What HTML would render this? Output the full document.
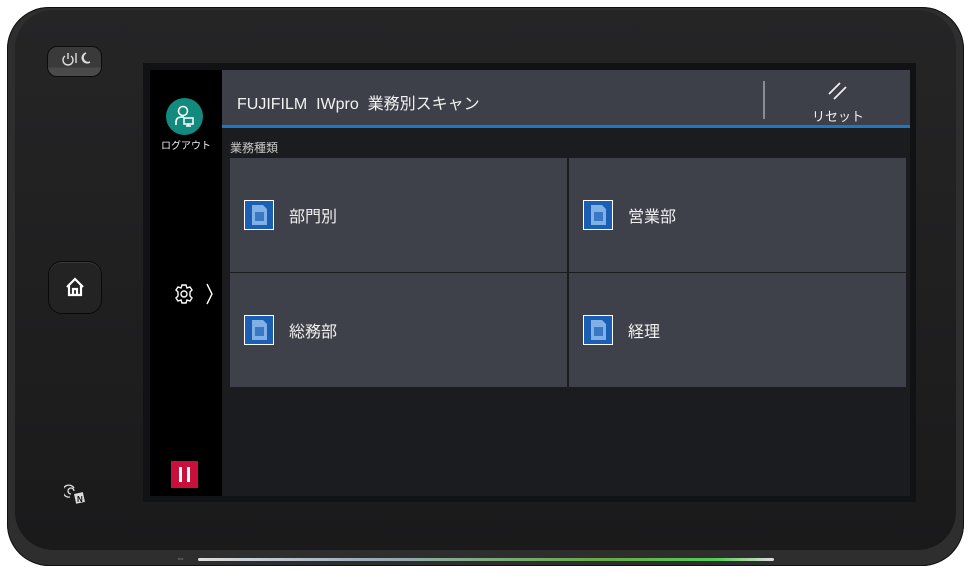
<!DOCTYPE html>
<html><head><meta charset="utf-8"><style>
*{margin:0;padding:0;box-sizing:border-box}
body{width:970px;height:570px;background:#fff;position:relative;overflow:hidden;font-family:"Liberation Sans","Noto Sans CJK JP",sans-serif}
.dev{position:absolute;left:7px;top:7px;width:957px;height:559px;border-radius:42px;background:#2e2e2f;box-shadow:inset 0 0 0 1px #111}
.face{position:absolute;left:8px;top:3px;width:941px;height:540px;border-radius:38px;background:linear-gradient(#252526,#1a1a1b)}
.bez{position:absolute;left:143px;top:63px;width:773px;height:439px;background:#111214}
.side{position:absolute;left:150px;top:70px;width:72px;height:426px;background:#000}
.main{position:absolute;left:222px;top:70px;width:688px;height:426px;background:#1b1c20}
.hdr{position:absolute;left:0;top:0;width:688px;height:58px;background:#3e4049;border-bottom:3px solid #1b78c8}
.tile{position:absolute;width:337px;height:114px;background:#3f414a;color:#f0f0f0;font-size:16px}
.tile span{position:absolute;left:59px;top:45px}
.ic{position:absolute;left:14px;top:42px}
.btn{position:absolute;border-radius:10px;background:#2b2b2c;border:1px solid #0c0c0c;box-shadow:0 1px 0 #3a3a3a inset}
</style></head><body>
<div class="dev"><div class="face"></div></div>
<div class="btn" style="left:47px;top:46px;width:55px;height:31px;background:linear-gradient(#3a3a3b 70%,#4a4a4b 70%)">
<svg width="55" height="24" viewBox="0 0 55 24"><path d="M17 9 A5 5 0 1 0 23 9 M20 6 V12" fill="none" stroke="#ddd" stroke-width="1.4"/><path d="M28 6 V16" stroke="#ddd" stroke-width="1.4"/><path d="M38 6 A5 5 0 1 0 42 15 A4 4 0 0 1 38 6 Z" fill="none" stroke="#ddd" stroke-width="1.4"/></svg></div>
<div class="btn" style="left:48px;top:261px;width:54px;height:53px;border-radius:14px;background:#232324;border-color:#0a0a0a">
<svg width="54" height="53" viewBox="0 0 54 53"><path d="M18 25 L26 17 L34 25 M20 23 V33 H32 V23 M24 33 V27 H28 V33" fill="none" stroke="#fff" stroke-width="2.2"/></svg></div>
<svg style="position:absolute;left:64px;top:484px" width="24" height="24" viewBox="0 0 24 24"><path d="M10 4 A6 6 0 1 0 6 13 M10 7 A3 3 0 1 0 7 10" fill="none" stroke="#ddd" stroke-width="1.3"/><rect x="11" y="9" width="9" height="10" fill="#ddd" transform="rotate(-12 15 14)"/><text x="13" y="18" font-size="8" font-weight="bold" fill="#111" font-family="Liberation Sans">N</text></svg>
<div style="position:absolute;left:198px;top:558px;width:576px;height:3px;border-radius:2px;background:linear-gradient(90deg,#ddd,#9ab 30%,#6a4 70%,#5c5 90%,#ddd)"></div>
<div style="position:absolute;left:176px;top:553px;color:#999;font-size:9px">⇔</div>
<div class="bez"></div>
<div class="side">
<div style="position:absolute;left:16px;top:28px;width:37px;height:37px;border-radius:50%;background:#138a7e">
<svg width="37" height="37" viewBox="0 0 37 37"><circle cx="17" cy="13" r="4.5" fill="none" stroke="#fff" stroke-width="1.6"/><path d="M10 27 V24 Q10 19 16 19 H18" fill="none" stroke="#fff" stroke-width="1.6"/><rect x="18" y="20" width="9" height="6" fill="none" stroke="#fff" stroke-width="1.5"/><path d="M22.5 26 V28 M20 28 H25" stroke="#fff" stroke-width="1.4"/></svg></div>
<div style="position:absolute;left:0;width:72px;top:67px;text-align:center;color:#eee;font-size:10px">ログアウト</div>
<svg style="position:absolute;left:22px;top:212px" width="44" height="24" viewBox="0 0 44 24"><g transform="translate(12,12)" fill="none" stroke="#fff" stroke-width="1.4"><circle r="3"/><path d="M-2 -9 H2 L3 -6 L6 -7 L8 -4 L6 -2 L6 2 L8 4 L6 7 L3 6 L2 9 H-2 L-3 6 L-6 7 L-8 4 L-6 2 L-6 -2 L-8 -4 L-6 -7 L-3 -6 Z"/></g><path d="M35 2 L40 12 L35 22" fill="none" stroke="#fff" stroke-width="1.4"/></svg>
<div style="position:absolute;left:21px;top:391px;width:27px;height:27px;background:#c8103a"><div style="position:absolute;left:8px;top:6px;width:3px;height:15px;background:#fff"></div><div style="position:absolute;left:16px;top:6px;width:3px;height:15px;background:#fff"></div></div>
</div>
<div class="main">
<div class="hdr">
<div style="position:absolute;left:15px;top:20px;color:#f2f2f2;font-size:16px">FUJIFILM&nbsp;&nbsp;IWpro&nbsp;&nbsp;業務別スキャン</div>
<div style="position:absolute;left:541px;top:11px;width:2px;height:38px;background:#8a8c92"></div>
<svg style="position:absolute;left:604px;top:10px" width="24" height="22" viewBox="0 0 24 22"><path d="M3 14 L14 3 M8 19 L20 7" stroke="#eee" stroke-width="1.8"/></svg>
<div style="position:absolute;left:590px;top:36px;color:#eee;font-size:13px">リセット</div>
</div>
<div style="position:absolute;left:8px;top:69px;color:#c8c8c8;font-size:12px">業務種類</div>
<div class="tile" style="left:8px;top:88px"><svg class="ic" width="30" height="30"><rect x="0.5" y="0.5" width="29" height="29" fill="#1a5fb4" stroke="#fff"/><path d="M8 5 H19 L23 9 V25 H8 Z" fill="#7fb0e6"/><rect x="11" y="12" width="9" height="9" fill="#3a78c4"/></svg><span>部門別</span></div>
<div class="tile" style="left:347px;top:88px"><svg class="ic" width="30" height="30"><rect x="0.5" y="0.5" width="29" height="29" fill="#1a5fb4" stroke="#fff"/><path d="M8 5 H19 L23 9 V25 H8 Z" fill="#7fb0e6"/><rect x="11" y="12" width="9" height="9" fill="#3a78c4"/></svg><span>営業部</span></div>
<div class="tile" style="left:8px;top:203px"><svg class="ic" width="30" height="30"><rect x="0.5" y="0.5" width="29" height="29" fill="#1a5fb4" stroke="#fff"/><path d="M8 5 H19 L23 9 V25 H8 Z" fill="#7fb0e6"/><rect x="11" y="12" width="9" height="9" fill="#3a78c4"/></svg><span>総務部</span></div>
<div class="tile" style="left:347px;top:203px"><svg class="ic" width="30" height="30"><rect x="0.5" y="0.5" width="29" height="29" fill="#1a5fb4" stroke="#fff"/><path d="M8 5 H19 L23 9 V25 H8 Z" fill="#7fb0e6"/><rect x="11" y="12" width="9" height="9" fill="#3a78c4"/></svg><span>経理</span></div>
</div>
</body></html>
